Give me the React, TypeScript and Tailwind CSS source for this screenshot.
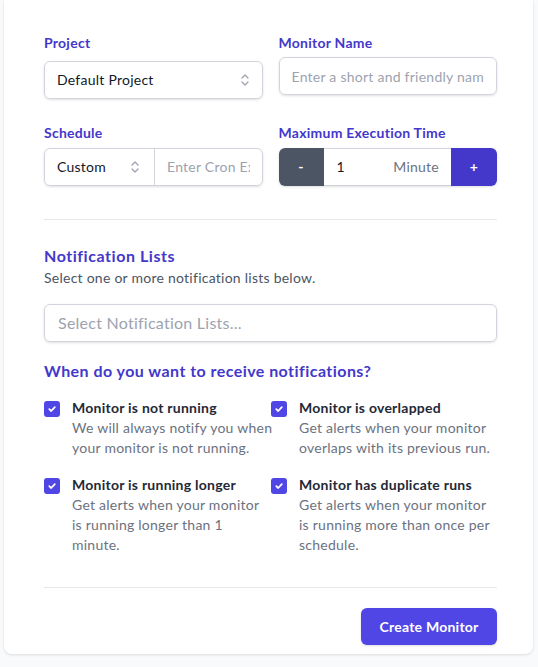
import React, { useState } from 'react';

const font = { fontFamily: 'Lato, "Noto Sans", sans-serif' };

const Chevrons = () => (
  <svg width="10" height="16" viewBox="0 0 10 16" fill="none" stroke="#9ca3af" strokeWidth="1.3" strokeLinecap="round" strokeLinejoin="round">
    <path d="M2 6l3-3 3 3" />
    <path d="M2 10l3 3 3-3" />
  </svg>
);

const Check = () => (
  <svg width="10" height="10" viewBox="0 0 10 10" fill="none" stroke="white" strokeWidth="1.8" strokeLinecap="round" strokeLinejoin="round">
    <path d="M2.3 5.2l1.9 1.8 3.6-3.8" />
  </svg>
);

// description lines kept as in the design
const alerts = [
  { title: 'Monitor is not running', lines: ['We will always notify you when', 'your monitor is not running.'] },
  { title: 'Monitor is overlapped', lines: ['Get alerts when your monitor', 'overlaps with its previous run.'] },
  { title: 'Monitor is running longer', lines: ['Get alerts when your monitor', 'is running longer than 1', 'minute.'] },
  { title: 'Monitor has duplicate runs', lines: ['Get alerts when your monitor', 'is running more than once per', 'schedule.'] },
];

const App: React.FC = () => {
  const [minutes, setMinutes] = useState(1);

  return (
    <div className="min-h-[667px] bg-[#f9fafb] tracking-[0.25px]" style={font}>
      <div className="ml-[4px] w-[529px] bg-white rounded-b-lg shadow-[0_1px_3px_rgba(0,0,0,0.12)] pl-10 pr-9 pt-[33px] pb-[9px]">
        <div className="grid grid-cols-2 gap-x-4">
          <div className="flex flex-col">
            <label className="text-sm font-bold text-[#4338ca] leading-5">Project</label>
            <div className="mt-[8px] h-[38px] flex items-center justify-between px-3 border border-[#d1d5db] rounded-md shadow-sm">
              <span className="text-sm text-[#111827]">Default Project</span>
              <Chevrons />
            </div>
          </div>
          <div className="flex flex-col">
            <label className="text-sm font-bold text-[#4338ca] leading-5">Monitor Name</label>
            <input
              className="mt-[4px] h-[38px] px-3 border border-[#d1d5db] rounded-md shadow-sm text-sm outline-none placeholder:text-[#9ca3af]"
              placeholder="Enter a short and friendly name"
            />
          </div>
        </div>

        <div className="grid grid-cols-2 gap-x-4 mt-[24px]">
          <div className="flex flex-col">
            <label className="text-sm font-bold text-[#4338ca] leading-5">Schedule</label>
            <div className="mt-[5px] h-[38px] flex border border-[#d1d5db] rounded-md shadow-sm overflow-hidden">
              <div className="w-[110px] flex items-center justify-between pl-3 pr-[14px] border-r border-[#d1d5db]">
                <span className="text-sm text-[#111827]">Custom</span>
                <Chevrons />
              </div>
              <input className="flex-1 min-w-0 px-3 text-sm outline-none placeholder:text-[#9ca3af]" placeholder="Enter Cron Expression" />
            </div>
          </div>
          <div className="flex flex-col">
            <label className="text-sm font-bold text-[#4338ca] leading-5">Maximum Execution Time</label>
            <div className="mt-[5px] h-[38px] flex rounded-md shadow-sm overflow-hidden">
              <button type="button" onClick={() => setMinutes(m => Math.max(1, m - 1))} className="w-[45px] bg-[#4b5563] text-white text-sm font-bold">-</button>
              <div className="flex-1 flex items-center justify-between pl-[13px] pr-3 border-y border-[#d1d5db]">
                <span className="text-sm text-[#111827]">{minutes}</span>
                <span className="text-sm text-[#6b7280]">Minute</span>
              </div>
              <button type="button" onClick={() => setMinutes(m => m + 1)} className="w-[46px] bg-[#4338ca] text-white text-sm font-bold">+</button>
            </div>
          </div>
        </div>

        <hr className="mt-[33px] border-[#e5e7eb]" />

        <h3 className="mt-[24px] text-base font-bold text-[#4338ca] leading-6 tracking-[0.55px]">Notification Lists</h3>
        <p className="text-sm text-[#4b5563] leading-5">Select one or more notification lists below.</p>
        <div className="mt-[16px] h-[38px] flex items-center px-[13px] border border-[#d1d5db] rounded-md shadow-sm">
          <span className="text-base text-[#9ca3af]">Select Notification Lists...</span>
        </div>

        <h3 className="mt-[17px] text-base font-bold text-[#4338ca] leading-6 tracking-[0.45px]">When do you want to receive notifications?</h3>

        <div className="mt-[15px] grid grid-cols-[227px_1fr] gap-y-[17px]">
          {alerts.map(a => (
            <div key={a.title} className="flex gap-3">
              <div className="mt-[3px] w-4 h-4 shrink-0 rounded-[3px] bg-[#4f46e5] flex items-center justify-center">
                <Check />
              </div>
              <div className="-mr-3">
                <div className="text-sm font-bold text-[#1f2937] leading-5">{a.title}</div>
                <div className="text-sm text-[#6b7280] leading-5">
                  {a.lines.map(l => (
                    <div key={l} className="whitespace-nowrap">{l}</div>
                  ))}
                </div>
              </div>
            </div>
          ))}
        </div>

        <hr className="mt-[32px] border-[#e5e7eb]" />

        <div className="mt-[20px] flex justify-end">
          <button type="button" className="w-[136px] h-[37px] bg-[#4f46e5] text-white text-sm font-bold rounded-md shadow-sm">
            Create Monitor
          </button>
        </div>
      </div>
    </div>
  );
};

export default App;
